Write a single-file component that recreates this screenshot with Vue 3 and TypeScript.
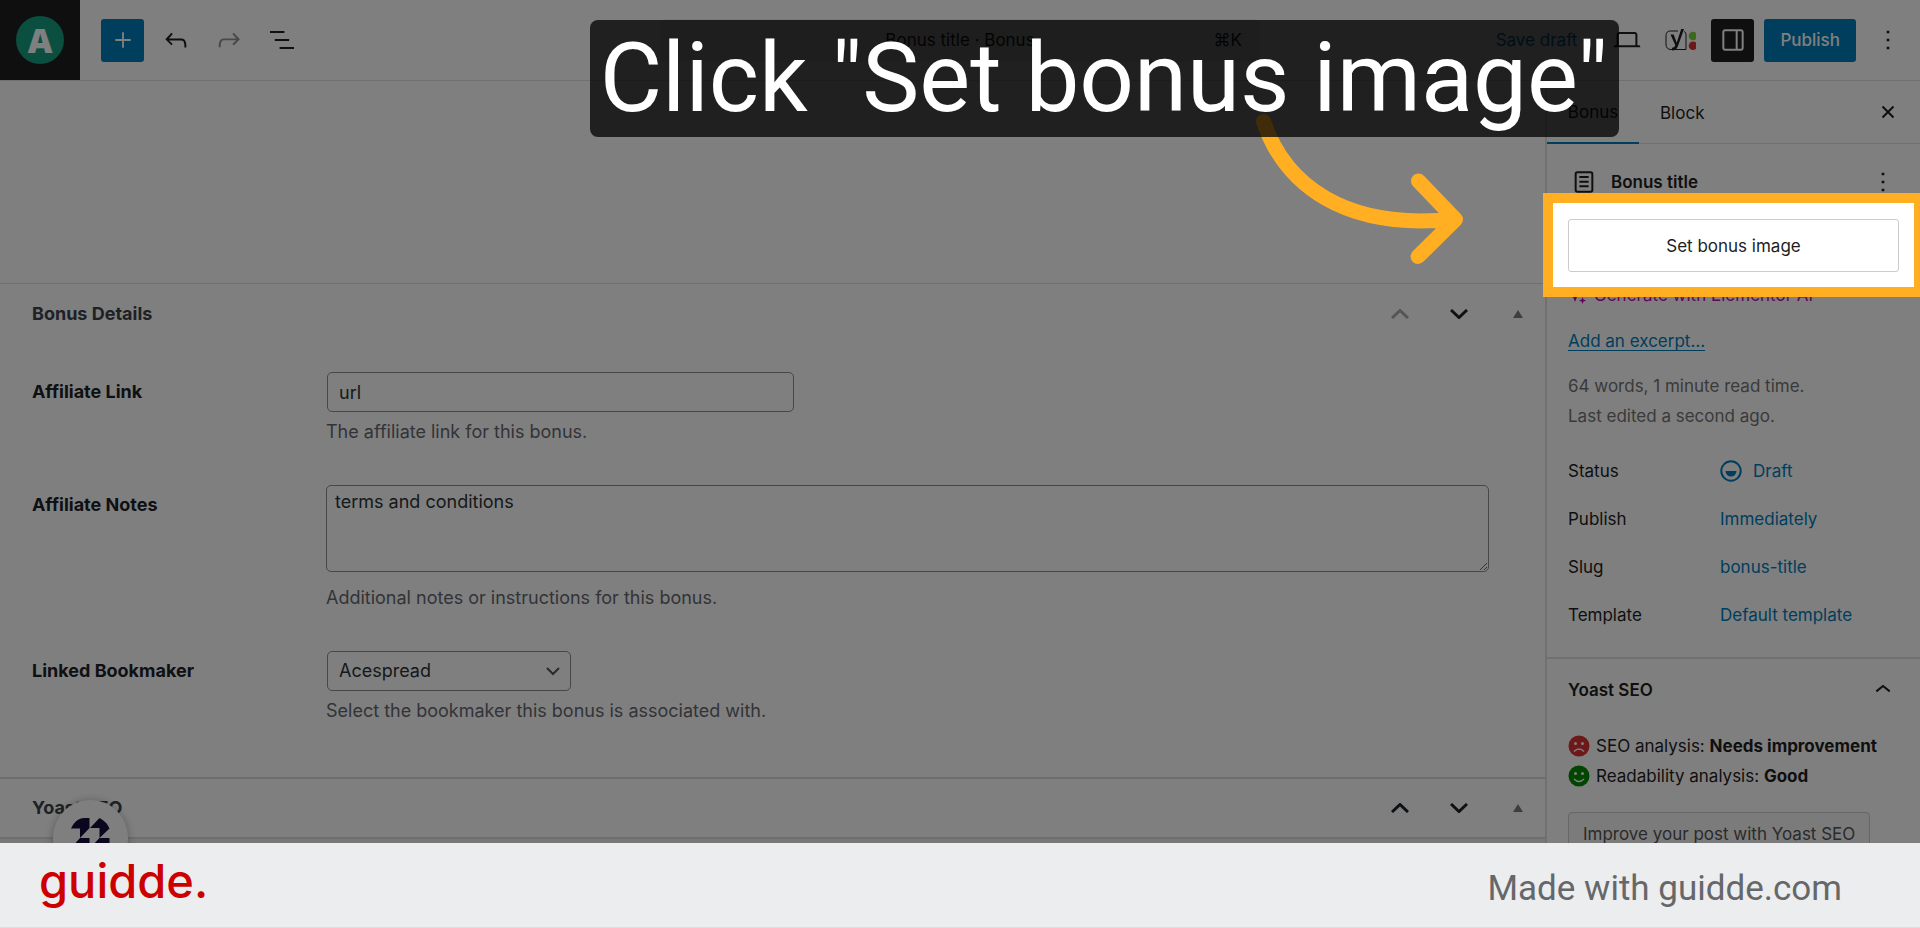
<script setup lang="ts">
import { ref } from 'vue'

interface DetailRow {
  label: string
  value: string
  draft?: boolean
}

const affiliateLink = ref('url')
const affiliateNotes = ref('terms and conditions')
const bookmaker = ref('Acespread')

const details: DetailRow[] = [
  { label: 'Status', value: 'Draft', draft: true },
  { label: 'Publish', value: 'Immediately' },
  { label: 'Slug', value: 'bonus-title' },
  { label: 'Template', value: 'Default template' },
]
</script>

<template>
  <div class="page">
    <div class="editor">
      <header class="topbar">
        <div class="tools">
          <a class="site" href="#" aria-label="View posts"><span class="site-mark">A</span></a>
          <button class="tool primary" type="button" aria-label="Add block">
            <svg class="icon" viewBox="0 0 24 24"><path d="M11.3 6.2h1.4v5.1h5.1v1.4h-5.1v5.1h-1.4v-5.1H6.2v-1.4h5.1z" /></svg>
          </button>
          <button class="tool" type="button" aria-label="Undo">
            <svg class="icon" viewBox="0 0 24 24"><path d="M18.3 11.7c-.6-.6-1.4-.9-2.3-.9H6.7l2.9-3.3-1.1-1-4.5 5L8.5 16l1-1-2.7-2.7H16c.5 0 .9.2 1.3.5 1 1 1 3.4 1 4.5v.3h1.5v-.2c0-1.5 0-4.3-1.5-5.7z" /></svg>
          </button>
          <button class="tool faded" type="button" aria-label="Redo">
            <svg class="icon" viewBox="0 0 24 24"><path d="M15.6 6.5l-1.1 1 2.9 3.3H8c-.9 0-1.7.3-2.3.9-1.4 1.5-1.4 4.2-1.4 5.6v.2h1.5v-.3c0-1.1 0-3.5 1-4.5.3-.3.7-.5 1.3-.5h9.2L14.5 15l1.1 1.1 4.6-4.6-4.6-5z" /></svg>
          </button>
          <button class="tool" type="button" aria-label="Document overview">
            <svg class="icon" viewBox="0 0 24 24"><path d="M13.8 5.2H3v1.5h10.8V5.2zm-3.6 12v1.5H21v-1.5H10.2zm7.2-6H6.6v1.5h10.8v-1.5z" /></svg>
          </button>
        </div>
        <button class="command" type="button">
          <span></span><span>Bonus title · Bonus</span><span class="shortcut">⌘K</span>
        </button>
        <div class="actions">
          <button class="save" type="button">Save draft</button>
          <button class="tool" type="button" aria-label="View">
            <svg class="icon" viewBox="0 0 24 24"><path d="M20.5 16h-.7V8c0-1.1-.9-2-2-2H6.2c-1.1 0-2 .9-2 2v8h-.7c-.8 0-1.5.2-1.5 1.5h20c0-1.3-.7-1.5-1.5-1.5zM5.7 8c0-.3.2-.5.5-.5h11.6c.3 0 .5.2.5.5v8H5.7V8z" /></svg>
          </button>
          <button class="tool" type="button" aria-label="Yoast SEO">
            <svg class="icon" viewBox="0 0 32 32">
              <path d="M14 7H6.500Q2 7 2 11.500v8.500Q2 25.500 7 25.500h15V10.500Q22 8 20 7.500" fill="none" stroke="#1e1e1e" stroke-width="1" />
              <path d="M6.500 10.500h3.200l3 8.200L17.200 5h2.800L14 22q-1.500 4.500-6 4.500v-2.800q2.600 0 3.300-2.500z" />
              <circle cx="29" cy="12" r="4.300" fill="#7ad03a" /><circle cx="29" cy="21.700" r="4.300" fill="#dc3232" />
            </svg>
          </button>
          <button class="tool dark" type="button" aria-label="Settings">
            <svg class="icon" viewBox="0 0 24 24"><path d="M18 4H6c-1.100 0-2 .9-2 2v12c0 1.100.9 2 2 2h12c1.100 0 2-.9 2-2V6c0-1.100-.9-2-2-2zm-4 14.500H6c-.3 0-.5-.2-.5-.5V6c0-.3.2-.5.5-.5h8v13zm4.500-.5c0 .3-.2.5-.5.5h-2.500v-13H18c.3 0 .5.2.5.5v12z" /></svg>
          </button>
          <button class="publish" type="button">Publish</button>
          <button class="tool" type="button" aria-label="Options">
            <svg class="icon" viewBox="0 0 24 24"><path d="M13 19h-2v-2h2v2zm0-6h-2v-2h2v2zm0-6h-2V5h2v2z" /></svg>
          </button>
        </div>
      </header>

      <div class="workspace">
        <main class="content">
          <div class="canvas"></div>
          <section>
            <div class="box-head">
              <h2>Bonus Details</h2>
              <div class="box-actions">
                <button type="button" class="off" aria-label="Move up"><svg viewBox="0 0 18 10"><path d="M1 9l8-7.500L17 9" /></svg></button>
                <button type="button" aria-label="Move down"><svg viewBox="0 0 18 10"><path d="M1 1l8 7.500L17 1" /></svg></button>
                <button type="button" class="toggle" aria-label="Toggle panel"><svg viewBox="0 0 10 8"><path d="M0 8l5-8 5 8z" /></svg></button>
              </div>
            </div>
            <div class="fields">
              <div class="field">
                <label for="link">Affiliate Link</label>
                <div>
                  <input id="link" v-model="affiliateLink" type="text" />
                  <p>The affiliate link for this bonus.</p>
                </div>
              </div>
              <div class="field">
                <label for="notes">Affiliate Notes</label>
                <div>
                  <textarea id="notes" v-model="affiliateNotes"></textarea>
                  <p class="loose">Additional notes or instructions for this bonus.</p>
                </div>
              </div>
              <div class="field">
                <label for="bookmaker">Linked Bookmaker</label>
                <div>
                  <div class="select">
                    <select id="bookmaker" v-model="bookmaker"><option>Acespread</option></select>
                    <svg viewBox="0 0 14 9"><path d="M1 1l6 6 6-6" /></svg>
                  </div>
                  <p>Select the bookmaker this bonus is associated with.</p>
                </div>
              </div>
            </div>
          </section>
          <section class="second">
            <div class="box-head">
              <h2>Yoast SEO</h2>
              <div class="box-actions">
                <button type="button" aria-label="Move up"><svg viewBox="0 0 18 10"><path d="M1 9l8-7.500L17 9" /></svg></button>
                <button type="button" aria-label="Move down"><svg viewBox="0 0 18 10"><path d="M1 1l8 7.500L17 1" /></svg></button>
                <button type="button" class="toggle" aria-label="Toggle panel"><svg viewBox="0 0 10 8"><path d="M0 8l5-8 5 8z" /></svg></button>
              </div>
            </div>
          </section>
          <div class="rest"></div>
        </main>

        <aside class="sidebar">
          <div class="tabs">
            <button class="tab active" type="button">Bonus</button>
            <button class="tab" type="button">Block</button>
            <button class="close" type="button" aria-label="Close settings">
              <svg viewBox="0 0 14 14"><path d="M1.500 1.500l11 11m0-11l-11 11" /></svg>
            </button>
          </div>
          <div class="card">
            <svg class="icon" viewBox="0 0 24 24"><path d="M15.500 7.500h-7V9h7V7.500zm-7 3.500h7v1.500h-7V11zm7 3.500h-7V16h7v-1.500z" /><path fill-rule="evenodd" d="M17 4H7a2 2 0 0 0-2 2v12a2 2 0 0 0 2 2h10a2 2 0 0 0 2-2V6a2 2 0 0 0-2-2zM7 5.500h10a.5.5 0 0 1 .5.5v12a.5.5 0 0 1-.5.5H7a.5.5 0 0 1-.5-.5V6a.5.5 0 0 1 .5-.5z" /></svg>
            <h2>Bonus title</h2>
            <button type="button" aria-label="Actions">
              <svg class="icon" viewBox="0 0 24 24"><path d="M13 19h-2v-2h2v2zm0-6h-2v-2h2v2zm0-6h-2V5h2v2z" /></svg>
            </button>
          </div>
          <div class="spotlight"><button type="button">Set bonus image</button></div>
          <button class="generate" type="button">
            <svg viewBox="0 0 20 20"><path d="M7 3l2 5 5 2-5 2-2 5-2-5-5-2 5-2zM14.500 12l1 2.500 2.500 1-2.500 1-1 2.500-1-2.500-2.500-1 2.500-1z" /></svg>
            Generate with Elementor AI
          </button>
          <a class="excerpt" href="#">Add an excerpt…</a>
          <p class="meta">64 words, 1 minute read time.<br />Last edited a second ago.</p>
          <dl class="details">
            <div v-for="row in details" :key="row.label">
              <dt>{{ row.label }}</dt>
              <dd>
                <button type="button">
                  <svg v-if="row.draft" viewBox="0 0 22 22"><circle cx="11" cy="11" r="9.700" fill="none" stroke="currentColor" stroke-width="2" /><path d="M5.500 11h11a5.500 5.500 0 0 1-11 0z" /></svg>
                  {{ row.value }}
                </button>
              </dd>
            </div>
          </dl>
          <section class="yoast">
            <button class="yoast-head" type="button">
              Yoast SEO
              <svg class="icon" viewBox="0 0 24 24"><path d="M6.500 12.400L12 8l5.500 4.400-.9 1.200L12 10l-4.500 3.600-1-1.200z" /></svg>
            </button>
            <p>
              <svg viewBox="0 0 22 22"><circle cx="11" cy="11" r="10.500" fill="#dc3232" /><g fill="#fff"><circle cx="7.500" cy="8.500" r="1.500" /><circle cx="14.500" cy="8.500" r="1.500" /></g><path d="M6 16.500q5-5 10 0" fill="none" stroke="#fff" stroke-width="1.500" /></svg>
              <span>SEO analysis: <strong>Needs improvement</strong></span>
            </p>
            <p>
              <svg viewBox="0 0 22 22"><circle cx="11" cy="11" r="10.500" fill="#008a00" /><g fill="#fff"><circle cx="7.500" cy="8.500" r="1.500" /><circle cx="14.500" cy="8.500" r="1.500" /></g><path d="M6 14q5 5 10 0" fill="none" stroke="#fff" stroke-width="1.500" /></svg>
              <span>Readability analysis: <strong>Good</strong></span>
            </p>
            <button class="improve" type="button">Improve your post with Yoast SEO</button>
          </section>
        </aside>
      </div>

      <div class="launcher">
        <svg viewBox="0 0 40 40"><path d="M0 10.500C3 4 8 0 13 0h5.500v10L9 20v-9.500zM19 10L28.500 0Q36 4 38.500 10.500L28.500 20V10zM9 20h9.500v10H0zM28.500 20h10L38.500 30H19z" /></svg>
      </div>
      <div class="shade"></div>
      <svg class="arrow" viewBox="0 0 210 152"><path d="M8.500 8.500C30 72 90 118 200 106M163.500 68l37 38.500-37.500 37" /></svg>
      <div class="caption">Click "Set bonus image"</div>
    </div>

    <footer class="footer">
      <a class="brand" href="#">guidde.</a>
      <span class="credit">Made with guidde.com</span>
    </footer>
  </div>
</template>

<style>
body {
  margin: 0;
}
</style>

<style scoped>
.page {
  display: flex;
  flex-direction: column;
  height: 100vh;
  overflow: hidden;
  background: #fff;
  color: #1e1e1e;
  font-family: Inter, "Liberation Sans", sans-serif;
  font-size: 17px;
  line-height: 24px;
}
* {
  box-sizing: border-box;
}
button,
input,
select,
textarea {
  font: inherit;
  color: inherit;
}
button {
  display: flex;
  align-items: center;
  justify-content: center;
  padding: 0;
  border: 0;
  background: none;
  white-space: nowrap;
}
svg {
  display: block;
  flex: none;
  fill: currentColor;
}
h2,
p,
dl,
dd {
  margin: 0;
}
.icon {
  width: 32px;
  height: 32px;
}
.editor {
  position: relative;
  display: flex;
  flex-direction: column;
  flex: 1;
  min-height: 0;
  overflow: hidden;
}
.topbar {
  display: grid;
  grid-template-columns: 1fr 600px 1fr;
  align-items: center;
  flex: none;
  height: 81px;
  border-bottom: 1px solid #e0e0e0;
}
.tools,
.actions {
  display: flex;
  align-items: center;
  gap: 10px;
}
.actions {
  justify-content: flex-end;
  padding-right: 11px;
}
.site {
  display: grid;
  place-items: center;
  width: 80px;
  height: 80px;
  margin-right: 11px;
  background: #1e1e1e;
  text-decoration: none;
}
.site-mark {
  width: 48px;
  height: 48px;
  border-radius: 50%;
  background: #169f82;
  color: #fff;
  font: 800 34px/48px "Open Sans", sans-serif;
  text-align: center;
}
.tool {
  width: 43px;
  height: 43px;
  border-radius: 3px;
}
.primary {
  background: #007cba;
  color: #fff;
}
.dark {
  background: #1e1e1e;
  color: #fff;
}
.faded {
  color: #949494;
}
.command {
  display: grid;
  grid-template-columns: 1fr auto 1fr;
  height: 43px;
  padding: 0 18px;
  border-radius: 5px;
  background: #f0f0f0;
}
.shortcut {
  text-align: right;
}
.save {
  padding: 0 18px;
  color: #007cba;
}
.publish {
  height: 43px;
  padding: 0 16px;
  border-radius: 3px;
  background: #007cba;
  color: #fff;
  font-weight: 500;
}
.workspace {
  display: grid;
  grid-template-columns: minmax(0, 1fr) 375px;
  flex: 1;
  min-height: 0;
}
.content {
  display: flex;
  flex-direction: column;
  font-size: 18px;
}
.canvas {
  height: 202px;
  flex: none;
  border-bottom: 1px solid #dcdcde;
  box-sizing: content-box;
}
.box-head {
  display: flex;
  align-items: center;
  justify-content: space-between;
  height: 59px;
  padding: 0 21px 0 32px;
}
.box-head h2 {
  color: #3c434a;
  font-size: 18px;
  font-weight: 700;
}
.box-actions {
  display: flex;
}
.box-actions button {
  width: 59px;
  height: 48px;
  color: #1d2327;
}
.box-actions svg {
  width: 18px;
  height: 10px;
  fill: none;
  stroke: currentColor;
  stroke-width: 3;
}
.box-actions .off {
  color: #a7aaad;
}
.box-actions .toggle {
  width: 12px;
  margin-left: 24px;
  color: #787c82;
}
.box-actions .toggle svg {
  width: 10px;
  height: 8px;
  fill: currentColor;
  stroke: none;
}
.fields {
  display: flex;
  flex-direction: column;
  gap: 41px;
  padding: 29px 56px 54px 32px;
}
.field {
  display: grid;
  grid-template-columns: 294px minmax(0, 1fr);
}
.field label {
  color: #1d2327;
  font-weight: 700;
  line-height: 40px;
}
.field p {
  margin-top: 8px;
  color: #646970;
}
.field .loose {
  margin-top: 14px;
}
.field input,
.field textarea,
.field select {
  display: block;
  border: 1px solid #8c8f94;
  border-radius: 5px;
  background: #fff;
  color: #2c3338;
}
.field input {
  width: 467px;
  max-width: 100%;
  height: 40px;
  margin-left: 1px;
  padding: 0 11px;
}
.field textarea {
  width: 100%;
  height: 87px;
  padding: 4px 8px;
  resize: vertical;
}
.select {
  display: grid;
  align-items: center;
  width: 244px;
  margin-left: 1px;
}
.select > * {
  grid-area: 1 / 1;
}
.field select {
  width: 100%;
  height: 40px;
  padding: 0 11px;
  appearance: none;
}
.select svg {
  width: 14px;
  height: 9px;
  margin-right: 11px;
  justify-self: end;
  fill: none;
  stroke: #50575e;
  stroke-width: 2;
  pointer-events: none;
}
.second {
  border-top: 2px solid #dcdcde;
  border-bottom: 2px solid #dcdcde;
}
.second .box-head {
  height: 58px;
}
.rest {
  flex: 1;
  background: #f0f0f1;
}
.sidebar {
  padding: 0 21px;
  border-left: 2px solid #e0e0e0;
}
.tabs {
  display: flex;
  height: 63px;
  margin: 0 -21px;
  border-bottom: 1px solid #e0e0e0;
}
.tab {
  height: 63px;
  padding: 0 21px;
}
.active {
  width: 92px;
  border-bottom: 2px solid #007cba;
}
.close {
  width: 43px;
  margin-left: auto;
  margin-right: 11px;
}
.close svg {
  width: 14px;
  height: 14px;
  stroke: currentColor;
  stroke-width: 2;
}
.card {
  display: flex;
  align-items: center;
  gap: 11px;
  height: 49px;
  padding-top: 26px;
}
.card h2 {
  flex: 1;
  font-size: 17px;
  font-weight: 600;
}
.spotlight {
  position: relative;
  z-index: 2;
  height: 104px;
  margin: 0 -25px;
  padding: 16px 15px;
  border: 10px solid #ffaf21;
  background: #fff;
}
.spotlight button {
  width: 100%;
  height: 53px;
  border: 1px solid #ccc;
  border-radius: 3px;
}
.generate {
  gap: 6px;
  margin-top: -14px;
  color: #c00bb9;
}
.generate svg {
  width: 20px;
  height: 20px;
}
.excerpt {
  display: table;
  margin-top: 22px;
  color: #007cba;
  text-underline-offset: 3px;
}
.meta {
  margin-top: 18px;
  color: #757575;
  line-height: 30px;
}
.details {
  margin-top: 16px;
}
.details div {
  display: grid;
  grid-template-columns: 152px 1fr;
  align-items: center;
  height: 48px;
}
.details button {
  gap: 11px;
  color: #007cba;
}
.details svg {
  width: 22px;
  height: 22px;
}
.yoast {
  margin: 18px -21px 0;
  padding: 0 21px;
  border-top: 2px solid #e0e0e0;
}
.yoast-head {
  justify-content: space-between;
  width: 100%;
  height: 62px;
  margin-bottom: 10px;
  font-weight: 600;
}
.yoast p {
  display: flex;
  align-items: center;
  gap: 6px;
  height: 30px;
  white-space: nowrap;
}
.yoast p svg {
  width: 22px;
  height: 22px;
}
.yoast strong {
  font-weight: 700;
}
.improve {
  height: 43px;
  margin-top: 21px;
  padding: 0 14px;
  border: 1px solid #ccc;
  border-radius: 4px;
  background: #f7f7f7;
  color: #555;
}
.launcher {
  position: absolute;
  bottom: -32px;
  left: 53px;
  display: grid;
  justify-items: center;
  width: 75px;
  height: 75px;
  padding-top: 18px;
  border-radius: 50%;
  background: #fff;
  box-shadow: 0 1px 8px rgba(0, 0, 0, 0.3);
  color: #150d3b;
}
.launcher svg {
  width: 40px;
  height: 40px;
}
.shade {
  position: absolute;
  inset: 0;
  z-index: 1;
  background: rgba(0, 0, 0, 0.5);
}
.arrow {
  position: absolute;
  top: 113px;
  right: 455px;
  z-index: 3;
  width: 210px;
  height: 152px;
  fill: none;
  stroke: #ffaf21;
  stroke-width: 15;
  stroke-linecap: round;
  stroke-linejoin: round;
}
.caption {
  position: absolute;
  top: 20px;
  right: 301px;
  z-index: 4;
  height: 117px;
  padding: 0 11px 0 10px;
  border-radius: 8px;
  background: rgba(0, 0, 0, 0.75);
  color: #fff;
  font: 400 96px/116px Roboto, sans-serif;
  white-space: nowrap;
}
.footer {
  display: flex;
  align-items: center;
  justify-content: space-between;
  flex: none;
  height: 85px;
  padding: 0 78px 0 39px;
  border-bottom: 1px solid #dcdddf;
  background: #ecedef;
}
.brand {
  padding-bottom: 8px;
  color: #c00;
  font-size: 47px;
  font-weight: 500;
  line-height: 56px;
  text-decoration: none;
}
.credit {
  padding-top: 8px;
  color: #666769;
  font: 400 35px/42px Roboto, sans-serif;
}
</style>
